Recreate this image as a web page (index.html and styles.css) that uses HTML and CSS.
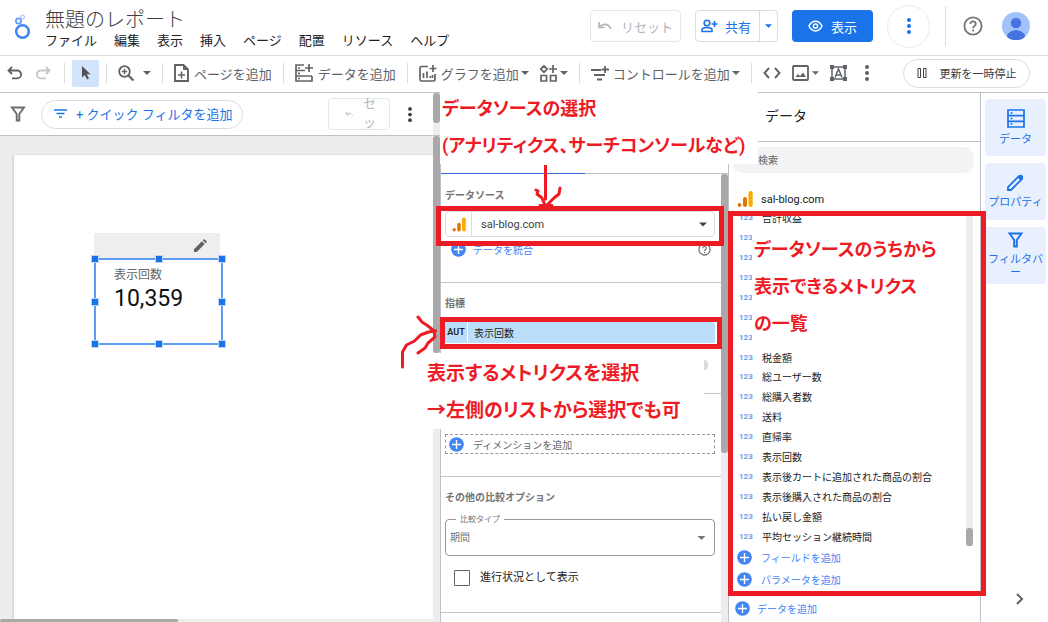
FILE: index.html
```html
<!DOCTYPE html>
<html lang="ja">
<head>
<meta charset="utf-8">
<meta name="viewport" content="width=device-width, initial-scale=1">
<title>無題のレポート</title>
<link rel="stylesheet" href="styles.css">
</head>
<body>
<svg class="defs" aria-hidden="true">
  <symbol id="plus-disc" viewBox="0 0 15 15"><circle cx="7.5" cy="7.5" r="7.3" fill="#4285f4"/><path d="M7.5 3v9M3 7.5h9" stroke="#fff" stroke-width="1.4"/></symbol>
  <symbol id="ga" viewBox="0 0 16 16"><circle cx="2.5" cy="14" r="1.9" fill="#e37400"/><rect x="6" y="6" width="4" height="10" rx="2" fill="#e37400"/><rect x="11.5" y="0" width="4.2" height="16" rx="2" fill="#f9ab00"/></symbol>
  <symbol id="caret" viewBox="0 0 8 4"><path d="M0 0h8L4 4z" fill="currentColor"/></symbol>
  <symbol id="dots" viewBox="0 0 4 16"><circle cx="2" cy="2" r="2"/><circle cx="2" cy="8" r="2"/><circle cx="2" cy="14" r="2"/></symbol>
  <symbol id="undo" viewBox="0 0 16 14"><path d="M5 1 1.5 4.5 5 8M2 4.500h8.200a3.900 3.900 0 0 1 0 7.800H5" fill="none" stroke="currentColor" stroke-width="1.8"/></symbol>
  <symbol id="reset" viewBox="0 0 14 8"><path d="M1 0v5.500h5.500M1.500 5C5 1 10.500 1.500 13 7" fill="none" stroke="currentColor" stroke-width="1.7"/></symbol>
  <symbol id="funnel" viewBox="0 0 16 16"><path d="M2 1.500h12L9.300 8v6.500H6.700V8z" fill="none" stroke="currentColor" stroke-width="1.900"/></symbol>
  <symbol id="help" viewBox="0 0 20 20"><circle cx="10" cy="10" r="8.600" fill="none" stroke="currentColor" stroke-width="1.800"/><path d="M7.300 8c0-3.600 5.500-3.500 5.500 0 0 1.900-2.700 2-2.700 4.300" fill="none" stroke="currentColor" stroke-width="1.700"/><circle cx="10.100" cy="14.500" r="1.100" fill="currentColor"/></symbol>
  <symbol id="pencil" viewBox="0 0 14 14"><path d="M0 14v-3L8.500 2.500l3 3L3 14zM9.500 1.500 11 0l3 3-1.500 1.500z" fill="currentColor"/></symbol>
</svg>

<div class="app">
  <header class="header">
    <svg class="logo" viewBox="0 0 18 26"><circle cx="10.500" cy="17.500" r="6.300" fill="none" stroke="#4285f4" stroke-width="2.600"/><circle cx="6.500" cy="7" r="2.600" fill="none" stroke="#669df6" stroke-width="1.800"/><circle cx="10.500" cy="3" r="1.900" fill="none" stroke="#aecbfa" stroke-width="1.400"/></svg>
    <div class="heading">
      <h1 class="title">無題のレポート</h1>
      <nav class="menu">
        <button>ファイル</button><button>編集</button><button>表示</button><button>挿入</button><button>ページ</button><button>配置</button><button>リソース</button><button>ヘルプ</button>
      </nav>
    </div>
    <div class="actions">
      <button class="btn btn-reset" disabled><svg width="14" height="8"><use href="#reset"/></svg>リセット</button>
      <div class="split">
        <button class="split-main"><svg width="17" height="14" viewBox="0 0 17 14"><g fill="none" stroke="currentColor" stroke-width="1.600"><circle cx="6" cy="4" r="2.800"/><path d="M1 12.500v-1.500c0-1.500 2.500-2.500 5-2.500s5 1 5 2.500v1.500zM13.500 2v6M10.500 5h6"/></g></svg>共有</button>
        <button class="split-more" aria-label="共有オプション"><svg width="7" height="4"><use href="#caret"/></svg></button>
      </div>
      <button class="btn btn-view"><svg width="15" height="12" viewBox="0 0 15 12"><path d="M1 6c3-6.500 10-6.500 13 0-3 6.500-10 6.500-13 0z" fill="none" stroke="currentColor" stroke-width="1.500"/><circle cx="7.500" cy="6" r="2.100" fill="none" stroke="currentColor" stroke-width="1.500"/></svg>表示</button>
      <button class="more" aria-label="その他"><svg width="4" height="16" fill="#1a73e8"><use href="#dots"/></svg></button>
      <span class="rule"></span>
      <button class="icon help" aria-label="ヘルプ"><svg width="20" height="20"><use href="#help"/></svg></button>
      <button class="icon" aria-label="アカウント"><svg width="28" height="28" viewBox="0 0 28 28"><circle cx="14" cy="14" r="14" fill="#a1c2fa"/><circle cx="14" cy="11" r="5.200" fill="#4573df"/><path d="M5 25c0-9 18-9 18 0a14 14 0 0 1-18 0z" fill="#4573df"/></svg></button>
    </div>
  </header>

  <div class="toolbar">
    <button class="tool" aria-label="元に戻す"><svg width="16" height="14"><use href="#undo"/></svg></button>
    <button class="tool redo" aria-label="やり直し" disabled><svg width="16" height="14" viewBox="0 0 16 14"><path d="M11 1l3.500 3.500L11 8M14 4.500H5.800a3.900 3.900 0 0 0 0 7.800H11" fill="none" stroke="currentColor" stroke-width="1.800"/></svg></button>
    <span class="sep"></span>
    <button class="tool select-tool" aria-label="選択"><svg width="10" height="14" viewBox="0 0 10 14"><path d="M1 0v11.500l2.800-2.600L6 13.500l2-1-2.200-4.300H9.500z" fill="#505458"/></svg></button>
    <span class="sep"></span>
    <button class="tool zoom" aria-label="ズーム"><svg width="16" height="16" viewBox="0 0 16 16"><g fill="none" stroke="currentColor"><circle cx="6.500" cy="6.500" r="5.300" stroke-width="1.800"/><path d="M10.500 10.500l5 5" stroke-width="2.200"/><path d="M6.500 3.800v5.400M3.800 6.500h5.400" stroke-width="1.500"/></g></svg><svg width="8" height="4"><use href="#caret"/></svg></button>
    <span class="sep"></span>
    <button class="tool"><svg width="15" height="18" viewBox="0 0 15 18"><path d="M1 1h8.500L14 5.500V17H1z" fill="none" stroke="currentColor" stroke-width="1.900"/><path d="M9 1v5h5z" fill="currentColor"/><path d="M7.500 7.500v7M4 11h7" stroke="currentColor" stroke-width="1.600"/></svg>ページを追加</button>
    <span class="sep"></span>
    <button class="tool"><svg width="18" height="18" viewBox="0 0 18 18"><g fill="none" stroke="currentColor" stroke-width="1.700"><path d="M9 1H1v16h16v-5M1 6.500h9M1 12h16M14 0v8M10 4h8"/><path d="M3 4h2M3 9.300h2M3 14.500h2"/></g></svg>データを追加</button>
    <span class="sep"></span>
    <button class="tool caretted"><svg width="18" height="17" viewBox="0 0 18 17"><path d="M9 1.500H2.500Q1 1.500 1 3v11.500Q1 16 2.500 16h12Q16 16 16 14.500V9M14 0v7M10.500 3.500h7M4.500 13V8M8 13V6.500M11.300 13v-2M13.500 13v-3" fill="none" stroke="currentColor" stroke-width="1.700"/></svg>グラフを追加<svg class="caret" width="8" height="4"><use href="#caret"/></svg></button>
    <button class="tool community" aria-label="コミュニティ ビジュアリゼーション"><svg width="17" height="17" viewBox="0 0 17 17"><path d="M4 .800 7.200 4 4 7.200.800 4zM13 0v8M9 4h8M1 10.500h5.500V16H1zM10.500 10.500H16V16h-5.500z" fill="none" stroke="currentColor" stroke-width="1.700"/></svg><svg width="8" height="4"><use href="#caret"/></svg></button>
    <span class="sep"></span>
    <button class="tool caretted"><svg width="18" height="15" viewBox="0 0 18 15"><path d="M0 4h10M3 9h11M6 13.500h5M14 0v7M10.500 3.500h7.500" fill="none" stroke="currentColor" stroke-width="1.800"/></svg>コントロールを追加<svg class="caret" width="8" height="4"><use href="#caret"/></svg></button>
    <span class="sep"></span>
    <button class="tool" aria-label="URL の埋め込み"><svg width="18" height="12" viewBox="0 0 18 12"><path d="M6 1 1.500 6 6 11M12 1l4.500 5L12 11" fill="none" stroke="currentColor" stroke-width="1.900"/></svg></button>
    <button class="tool image-tool" aria-label="画像"><svg width="17" height="16" viewBox="0 0 17 16"><rect x="1" y="1" width="15" height="14" rx="1" fill="none" stroke="currentColor" stroke-width="1.800"/><path d="M3.500 12 6 9l2 2 3-3.500 3 4.500z" fill="currentColor"/></svg><svg width="7" height="4"><use href="#caret"/></svg></button>
    <button class="tool" aria-label="テキスト"><svg width="17" height="16" viewBox="0 0 17 16"><rect x="2" y="2" width="13" height="12" fill="none" stroke="currentColor" stroke-width="1.500"/><path d="M5 12.500 8.500 4l3.500 8.500M6 10h5" fill="none" stroke="currentColor" stroke-width="1.500"/><path d="M0 0h4v4H0zM13 0h4v4h-4zM0 12h4v4H0zM13 12h4v4h-4z" fill="currentColor"/></svg></button>
    <button class="tool overflow" aria-label="その他のツール"><svg width="4" height="16" fill="#5f6368"><use href="#dots"/></svg></button>
    <button class="pause"><svg width="10" height="10" viewBox="0 0 10 10"><path d="M1 .500h2.500v9H1zM6.500.500H9v9H6.500z" fill="none" stroke="currentColor"/></svg>更新を一時停止</button>
  </div>

  <main class="main">
    <section class="stage">
      <div class="filterbar">
        <svg class="filter-icon" width="16" height="16"><use href="#funnel"/></svg>
        <button class="quick"><svg width="13" height="9" viewBox="0 0 13 9"><path d="M0 1h13M2.500 4.500h8M5 8h3" stroke="currentColor" stroke-width="1.700"/></svg>+ クイック フィルタを追加</button>
        <button class="mini-reset" disabled><svg width="7" height="4"><use href="#reset"/></svg><span>セット</span></button>
        <button class="icon" aria-label="フィルタのその他"><svg width="4" height="15" fill="#3c4043"><use href="#dots"/></svg></button>
        <span class="track"><span class="thumb thumb-top"></span></span>
      </div>
      <div class="canvas">
        <div class="sheet">
          <div class="widget">
            <div class="widget-bar"><svg width="13" height="13"><use href="#pencil"/></svg></div>
            <div class="scorecard">
              <span class="metric">表示回数</span>
              <span class="value">10,359</span>
              <i class="h nw"></i><i class="h n"></i><i class="h ne"></i><i class="h w"></i><i class="h e"></i><i class="h sw"></i><i class="h s"></i><i class="h se"></i>
            </div>
          </div>
        </div>
        <span class="track"><span class="thumb thumb-canvas"></span></span>
      </div>
      <div class="hscroll"><span></span></div>
    </section>

    <section class="props">
      <div class="tabs"><span class="tab active"></span><span class="tab"></span></div>
      <div class="props-body">
        <div class="props-content">
          <div class="group source">
            <h2 class="label">データソース</h2>
            <button class="source-field"><span class="source-logo"><svg width="14" height="15"><use href="#ga"/></svg></span>sal-blog.com<svg class="end" width="8" height="5"><use href="#caret"/></svg></button>
            <div class="blend"><button class="add"><svg width="15" height="15"><use href="#plus-disc"/></svg>データを統合</button><svg class="blend-help" width="13" height="13"><use href="#help"/></svg></div>
          </div>
          <div class="group metrics">
            <h2 class="label">指標</h2>
            <button class="chip"><b>AUT</b><span>表示回数</span></button>
          </div>
          <div class="group dimension">
            <button class="add-dimension"><svg width="15" height="15"><use href="#plus-disc"/></svg>ディメンションを追加</button>
          </div>
          <div class="group compare">
            <h2 class="label">その他の比較オプション</h2>
            <div class="select-box">
              <label for="cmp">比較タイプ</label>
              <select id="cmp"><option>期間</option></select>
              <svg width="9" height="4"><use href="#caret"/></svg>
            </div>
            <label class="check"><input type="checkbox">進行状況として表示</label>
          </div>
        </div>
        <span class="track"><span class="thumb thumb-props"></span></span>
      </div>

      <div class="mark note-source">データソースの選択<br>(アナリティクス、サーチコンソールなど)</div>
      <div class="mark note-metric">表示するメトリクスを選択<br>→左側のリストから選択でも可</div>
      <span class="knob"></span>
      <div class="frame frame-source"></div>
      <div class="frame frame-metric"></div>
      <svg class="arrow arrow-down" width="32" height="48" viewBox="0 0 32 48"><path d="M15.500 0v34M6 25l2 1-1 3 5 4 3 7M30 23l-1 6-5 4-6 6M10 40.500h12" /></svg>
      <svg class="arrow arrow-side" width="40" height="54" viewBox="0 0 40 54"><path d="M2.500 52V37l4-7 8-4 6-6 8-3 7-1M18 2l4 5 6 4 6 5 1 6-7 6-3 5-7 5"/></svg>
    </section>

    <section class="data">
      <h2 class="data-title">データ</h2>
      <input class="search" type="search" placeholder="検索" aria-label="検索">
      <div class="data-source"><svg width="16" height="16"><use href="#ga"/></svg>sal-blog.com</div>
      <div class="list">
        <ul class="fields">
          <li>合計収益</li><li></li><li></li><li></li><li></li><li></li><li></li><li>税金額</li><li>総ユーザー数</li><li>総購入者数</li><li>送料</li><li>直帰率</li><li>表示回数</li><li>表示後カートに追加された商品の割合</li><li>表示後購入された商品の割合</li><li>払い戻し金額</li><li>平均セッション継続時間</li>
        </ul>
        <span class="track"><span class="thumb thumb-list"></span></span>
      </div>
      <div class="adders">
        <button class="add"><svg width="15" height="15"><use href="#plus-disc"/></svg>フィールドを追加</button>
        <button class="add"><svg width="15" height="15"><use href="#plus-disc"/></svg>パラメータを追加</button>
      </div>
      <button class="add add-data"><svg width="15" height="15"><use href="#plus-disc"/></svg>データを追加</button>
      <div class="frame frame-list"></div>
      <div class="mark note-list">データソースのうちから<br>表示できるメトリクス<br>の一覧</div>
    </section>

    <aside class="rail">
      <button><svg width="18" height="19" viewBox="0 0 18 19"><path d="M1 1h16v17H1zM1 6.700h16M1 12.300h16M3.500 4h2M3.500 9.500h2M3.500 15h2" fill="none" stroke="currentColor" stroke-width="1.700"/></svg>データ</button>
      <button><svg width="17" height="17" viewBox="0 0 17 17"><path d="M1 16v-3L12 2l3 3L4 16z" fill="none" stroke="currentColor" stroke-width="1.800"/><path d="M10.500 3.500l2.500-2.500c1.500-1 4 1 3 3L13.500 6.500z" fill="currentColor"/></svg>プロパティ</button>
      <button><svg width="17" height="16"><use href="#funnel"/></svg>フィルタバー</button>
      <button class="collapse" aria-label="折りたたむ"><svg width="8" height="12" viewBox="0 0 8 12"><path d="M1 1l5 5-5 5" fill="none" stroke="#5f6368" stroke-width="2"/></svg></button>
    </aside>
  </main>
</div>
</body>
</html>
```
FILE: styles.css
```css
* { box-sizing: border-box; }

body {
  margin: 0;
  overflow: hidden;
  background: #fff;
  color: #202124;
  font-family: Roboto, "Noto Sans CJK JP", sans-serif;
  font-size: 10px;
}

button, input, select { font: inherit; color: inherit; }

button {
  display: flex;
  align-items: center;
  margin: 0;
  padding: 0;
  border: 0;
  background: none;
  white-space: nowrap;
}

svg { display: block; flex: none; }
h1, h2, ul { margin: 0; padding: 0; font-weight: 400; list-style: none; }
.defs { position: absolute; width: 0; height: 0; }

.app { display: flex; flex-direction: column; height: 100vh; }

/* Header */
.header {
  display: flex;
  height: 56px;
  padding: 0 18px 0 12px;
  border-bottom: 1px solid #dadce0;
}
.logo { width: 18px; height: 26px; margin-top: 14px; }
.heading { margin: 7px 0 0 15px; }
.title { height: 26px; font-size: 20px; line-height: 26px; color: #3c4043; font-weight: 300; white-space: nowrap; }
.menu { display: flex; gap: 17px; font-size: 13px; line-height: 16px; }
.actions { display: flex; align-items: center; margin-left: auto; height: 52px; font-size: 13px; }
.btn { height: 32px; border-radius: 4px; justify-content: center; }
.btn-reset { gap: 9px; width: 91px; border: 1px solid #e4e5e7; color: #b4b6b9; }
.split { display: flex; height: 32px; margin-left: 14px; border: 1px solid #dadce0; border-radius: 4px; color: #1a73e8; }
.split-main { gap: 7px; width: 63px; padding-left: 5px; }
.split-more { justify-content: center; width: 18px; border-left: 1px solid #dadce0; }
.btn-view { gap: 8px; width: 81px; margin-left: 14px; background: #1a73e8; color: #fff; }
.more { justify-content: center; width: 43px; height: 43px; margin-left: 14px; border: 1px solid #e8eaed; border-radius: 50%; }
.rule { width: 1px; height: 40px; margin-left: 15px; background: #dadce0; }
.help { margin: 0 19px 0 17px; color: #6f7377; }

/* Toolbar */
.toolbar {
  display: flex;
  align-items: center;
  gap: 11px;
  height: 37px;
  padding: 0 18px 2px 7px;
  border-bottom: 1px solid #bdc1c6;
  color: #5f6368;
  font-size: 13px;
}
.tool { gap: 5px; }
.tool.redo { margin: 0 2px 0 1px; color: #c4c6c9; }
.select-tool { justify-content: center; width: 27px; height: 27px; margin: 0 -4px; border-radius: 2px; background: #d2e3fc; }
.zoom { gap: 9px; }
.sep { width: 1px; height: 20px; background: #dadce0; }
.caretted { gap: 4px; }
.caret { margin-left: -2px; }
.community, .image-tool { gap: 3px; }
.overflow { margin-left: 7px; }
.pause {
  justify-content: center;
  gap: 13px;
  width: 127px;
  height: 29px;
  margin-left: auto;
  border: 1px solid #dadce0;
  border-radius: 15px;
  color: #3c4043;
  font-size: 11px;
}

.main { display: flex; flex: 1; min-height: 0; }

/* Scrollbars */
.track { flex: none; width: 7px; background: #ededed; }
.thumb { display: block; width: 7px; border-radius: 3px; background: #a9a9a9; }
.thumb-top { height: 30px; }
.thumb-canvas { height: 217px; }
.thumb-props { height: 279px; }
.thumb-list { height: 18px; }

/* Report canvas */
.stage { display: flex; flex-direction: column; flex: 1; min-width: 0; }
.filterbar { display: flex; align-items: center; height: 43px; padding-left: 10px; overflow: hidden; border-bottom: 1px solid #bdc1c6; }
.filter-icon { color: #6b6e72; }
.quick {
  gap: 9px;
  height: 29px;
  margin: 0 auto 0 15px;
  padding: 0 9px 2px 12px;
  border: 1px solid #dadce0;
  border-radius: 15px;
  color: #1a73e8;
  font-size: 13px;
}
.mini-reset {
  justify-content: center;
  gap: 10px;
  width: 62px;
  height: 32px;
  padding-left: 4px;
  margin-right: 18px;
  border: 1px solid #e4e5e7;
  border-radius: 4px;
  color: #b4b6b9;
  font-size: 13px;
  line-height: 19px;
}
.mini-reset span { align-self: flex-start; width: 13px; margin-top: -5px; white-space: normal; }
.filterbar .track { align-self: stretch; margin-left: 21px; }
.canvas { display: flex; flex: 1; min-height: 0; padding-left: 14px; background: #ededed; }
.sheet { flex: 1; margin-top: 19px; padding: 78px 0 0 80px; background: #fff; box-shadow: -1px 0 2px #ccc; }
.widget { width: 129px; }
.widget-bar { display: flex; justify-content: flex-end; align-items: center; width: 126px; height: 25px; padding-right: 13px; background: #eee; color: #5f6368; }
.scorecard { position: relative; display: flex; flex-direction: column; height: 87px; padding: 7px 0 0 18px; border: 2px solid #5e9bf3; }
.metric { color: #666; font-size: 12px; line-height: 16px; }
.value { color: #111; font-size: 23px; line-height: 32px; }
.h { position: absolute; width: 6px; height: 6px; background: #1a73e8; outline: 1px solid #b9d4fa; transform: translate(-50%, -50%); }
.nw, .w, .sw { left: -1px; }
.n, .s { left: 50%; }
.ne, .e, .se { left: calc(100% + 1px); }
.nw, .n, .ne { top: -1px; }
.w, .e { top: 50%; }
.sw, .s, .se { top: calc(100% + 1px); }
.hscroll { height: 3px; background: #ededed; }
.hscroll span { display: block; width: 178px; height: 3px; border-radius: 2px; background: #a9a9a9; }

/* Chart properties */
.props { position: relative; z-index: 2; display: flex; flex-direction: column; width: 288px; border-left: 1px solid #bdc1c6; }
.tabs { display: flex; height: 81px; }
.tab { flex: 1; border-bottom: 1px solid #bdc1c6; }
.tab.active { border-bottom-color: #3367d6; }
.props-body { display: flex; flex: 1; min-height: 0; }
.props-content { flex: 1; overflow: hidden; }
.group { padding: 0 6px 0 4px; border-bottom: 1px solid #c4c7ca; }
.label { height: 16px; color: #757575; font-size: 10px; line-height: 16px; font-weight: 700; }
.source { height: 109px; padding-top: 14px; }
.source-field { width: 100%; height: 26px; margin-top: 7px; padding-right: 7px; border: 1px solid #dadce0; border-radius: 4px; color: #3c4043; font-size: 11px; }
.source-logo { display: flex; align-items: center; height: 24px; width: 26px; margin-right: 9px; padding-left: 6px; border-right: 1px solid #dadce0; }
.end { margin-left: auto; color: #444; }
.blend { display: flex; align-items: center; justify-content: space-between; height: 25px; padding: 0 4px 0 6px; color: #666; }
.add { gap: 7px; color: #4285f4; font-size: 10px; }
.metrics { height: 111px; padding-top: 13px; }
.chip { width: 100%; height: 21px; margin-top: 10px; padding-bottom: 1px; border-radius: 2px; background: #bbdefb; font-size: 10px; }
.chip b { width: 23px; font-size: 9px; font-weight: 600; text-align: center; line-height: 20px; border-right: 1px solid #fff; }
.chip span { margin-left: 6px; }
.dimension { height: 83px; padding-top: 40px; }
.add-dimension { gap: 9px; width: 100%; height: 20px; padding-left: 3px; border: 1px dashed #999; color: #666; font-size: 10px; }
.compare { height: 136px; padding-top: 13px; }
.select-box { position: relative; display: flex; align-items: center; height: 37px; margin-top: 13px; border: 1px solid #999; border-radius: 4px; color: #757575; }
.select-box label { position: absolute; top: -6px; left: 10px; padding: 0 4px; background: #fff; font-size: 8px; line-height: 12px; }
.select-box select { flex: 1; height: 35px; padding: 0 4px; border: 0; background: transparent; appearance: none; font-size: 10px; }
.select-box svg { margin-right: 8px; }
.check { display: flex; align-items: center; gap: 10px; width: max-content; margin: 14px 0 0 9px; font-size: 11px; line-height: 16px; }
.check input { appearance: none; width: 16px; height: 16px; margin: 0; border: 1px solid #5f6368; border-radius: 1px; }

/* Available fields */
.data { position: relative; display: flex; flex-direction: column; width: 253px; border: solid #bdc1c6; border-width: 0 1px; }
.data-title { height: 49px; padding-left: 36px; border-bottom: 1px solid #bdc1c6; font-size: 14px; line-height: 46px; }
.search { appearance: none; height: 26px; margin: 5px 6px 0 3px; padding: 0 26px; border: 0; border-radius: 10px; background: #f1f3f4; font-size: 10px; }
.search::placeholder { color: #5f6368; opacity: 1; }
.data-source { display: flex; align-items: center; gap: 8px; height: 43px; padding: 10px 0 0 8px; border-bottom: 1px solid #bdc1c6; font-size: 11px; }
.list { display: flex; flex: 1; min-height: 0; padding-right: 7px; overflow: hidden; }
.fields { display: grid; grid-auto-rows: 1fr; flex: 1; margin-top: -8px; font-size: 10px; }
.fields li { display: flex; align-items: center; white-space: nowrap; }
.fields li::before { content: "123"; width: 23px; margin-left: 10px; color: #6a9cf0; font-size: 8px; font-weight: 700; }
.list .track { display: flex; align-items: flex-end; }
.adders { display: flex; flex-direction: column; gap: 7px; padding: 4px 0 8px 8px; }
.adders .add { gap: 9px; }
.adders + .add { height: 27px; padding-left: 6px; }

/* Right rail */
.rail { display: flex; flex-direction: column; gap: 7px; width: 67px; padding: 6px 2px 17px 4px; }
.rail button { flex-direction: column; justify-content: center; gap: 5px; height: 57px; border-radius: 4px; background: #e8f0fe; color: #1a73e8; font-size: 11px; line-height: 13px; white-space: normal; }
.rail .collapse { height: 12px; margin-top: auto; padding-left: 8px; background: none; }

/* Annotations drawn over the interface */
.mark { position: absolute; background: #fff; color: #ed1c24; font-size: 18px; line-height: 37px; font-weight: 700; font-feature-settings: "palt"; white-space: nowrap; }
.note-source { left: -1px; top: -8px; width: 318px; height: 79px; padding: 5px 0 0 2px; }
.note-metric { left: -16px; top: 260px; width: 279px; height: 76px; padding: 2px 0 0 2px; font-size: 19px; }
.note-list { left: 23px; top: 138px; width: 200px; height: 111px; padding: 0 0 0 2px; }
.knob { position: absolute; left: 263px; top: 267px; width: 4px; height: 10px; border-radius: 0 5px 5px 0; background: #dadce0; }
.frame { position: absolute; border: 5px solid #ed1c24; }
.frame-source { left: -5px; top: 113px; width: 288px; height: 40px; }
.frame-metric { left: -1px; top: 224px; width: 282px; height: 32px; }
.frame-list { left: -1px; top: 118px; right: -6px; bottom: 26px; }
.arrow { position: absolute; fill: none; stroke: #ed1c24; stroke-width: 3; stroke-linecap: round; stroke-linejoin: round; }
.arrow-down { left: 89px; top: 72px; }
.arrow-side { left: -41px; top: 222px; }
```
